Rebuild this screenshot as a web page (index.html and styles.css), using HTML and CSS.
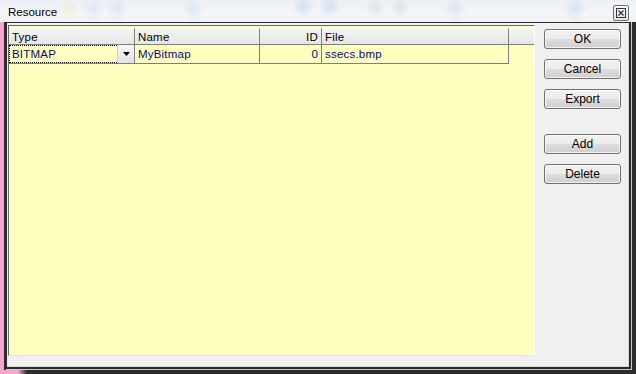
FILE: index.html
```html
<!DOCTYPE html>
<html>
<head>
<meta charset="utf-8">
<link rel="stylesheet" href="styles.css">
</head>
<body>
<div class="window">
  <div class="titlebar">
    <span class="title">Resource</span>
    <span class="close">
      <svg width="10" height="10" viewBox="0 0 10 10"><rect x="0.5" y="0.5" width="9" height="9" fill="none" stroke="#333"/><path d="M2.5 2.5L7.5 7.5M7.5 2.5L2.5 7.5" stroke="#333" stroke-width="1.3"/></svg>
    </span>
  </div>
  <div class="frame">
    <div class="ring">
      <div class="ring2">
        <div class="client">
          <div class="grid">
            <div class="row head">
              <div class="cell c-type">Type</div>
              <div class="cell c-name">Name</div>
              <div class="cell c-id num">ID</div>
              <div class="cell c-file">File</div>
              <div class="cell c-fill"></div>
            </div>
            <div class="row data">
              <div class="cell c-type combo">
                <span class="combo-text">BITMAP</span>
                <span class="drop"><svg width="7" height="4" viewBox="0 0 7 4"><path d="M0 0H7L3.5 4Z" fill="#000"/></svg></span>
              </div>
              <div class="cell c-name">MyBitmap</div>
              <div class="cell c-id num">0</div>
              <div class="cell c-file">ssecs.bmp</div>
            </div>
          </div>
          <div class="panel">
            <button class="btn">OK</button>
            <button class="btn">Cancel</button>
            <button class="btn">Export</button>
            <button class="btn gap">Add</button>
            <button class="btn">Delete</button>
          </div>
        </div>
      </div>
    </div>
  </div>
</div>
</body>
</html>
```
FILE: styles.css
```css
* { box-sizing: border-box; }
html, body { margin: 0; padding: 0; }
body {
  width: 636px;
  height: 374px;
  overflow: hidden;
  font-family: "Liberation Sans", Arial, sans-serif;
}
.window {
  width: 636px;
  height: 374px;
  display: flex;
  flex-direction: column;
  background:
    linear-gradient(to right, #f7a6d2 0, #f7a6d2 18px, #2c2c2c 27px) left bottom / 100% 4px no-repeat,
    linear-gradient(to right, #f7a6d2 0, #f7a6d2 4px, #2c2c2c 4px);
}
.titlebar {
  flex: none;
  height: 22px;
  display: flex;
  align-items: flex-start;
  justify-content: space-between;
  padding: 0 7px 0 8px;
  background:
    radial-gradient(circle at 68px 9px, rgba(225,235,140,0.3) 0, rgba(225,235,140,0) 11px),
    radial-gradient(circle at 93px 9px, rgba(185,185,240,0.25) 0, rgba(185,185,240,0) 12px),
    radial-gradient(circle at 117px 9px, rgba(185,175,235,0.25) 0, rgba(185,175,235,0) 12px),
    radial-gradient(circle at 193px 9px, rgba(140,185,235,0.22) 0, rgba(140,185,235,0) 11px),
    radial-gradient(circle at 303px 7px, rgba(110,170,235,0.25) 0, rgba(110,170,235,0) 11px),
    radial-gradient(circle at 330px 7px, rgba(110,160,230,0.22) 0, rgba(110,160,230,0) 11px),
    radial-gradient(circle at 375px 8px, rgba(160,160,180,0.2) 0, rgba(160,160,180,0) 10px),
    radial-gradient(circle at 400px 8px, rgba(160,160,180,0.2) 0, rgba(160,160,180,0) 10px),
    radial-gradient(circle at 455px 9px, rgba(140,155,225,0.2) 0, rgba(140,155,225,0) 11px),
    radial-gradient(circle at 575px 9px, rgba(120,175,235,0.22) 0, rgba(120,175,235,0) 12px),
    linear-gradient(to bottom, #eceff4 0, #f5f6f9 60%, #eff1f4 100%);
}
.title {
  font-size: 11.5px;
  color: #000;
  padding-top: 6px;
  line-height: 13px;
}
.close {
  margin-top: 5px;
  width: 16px;
  height: 16px;
  border: 1px solid #6f6f6f;
  border-radius: 2px;
  background: linear-gradient(#fbfbfb, #e4e4e4);
  display: flex;
  align-items: center;
  justify-content: center;
}
.frame {
  flex: 1;
  display: flex;
  padding: 0 4px 4px 6px;
}
.ring {
  flex: 1;
  display: flex;
  border-style: solid;
  border-color: #c9c9c9;
  border-width: 0 1px 1px 0;
}
.ring2 {
  flex: 1;
  display: flex;
  border-style: solid;
  border-color: #2c2c2c;
  border-width: 1px 2px 2px 1px;
}
.client {
  flex: 1;
  display: flex;
  align-items: flex-start;
  background: #f0f0f0;
  border-right: 1px solid #d9d9d9;
  border-bottom: 1px solid #d9d9d9;
}
.grid {
  width: 527px;
  height: 331px;
  margin: 2px 0 0 1px;
  padding-top: 2px;
  border-left: 1px solid #6a6a6a;
  border-top: 1px solid #6a6a6a;
  border-right: 1px solid #ffffff;
  border-bottom: 1px solid #e4e4e4;
  background: #ffffc0;
  font-size: 11.5px;
  letter-spacing: 0.2px;
}
.row {
  display: flex;
}
.cell {
  flex: none;
  border-right: 1px solid #7f7f7f;
  border-bottom: 1px solid #7f7f7f;
  padding: 0 3px;
  white-space: nowrap;
  overflow: hidden;
}
.head .cell {
  height: 17px;
  line-height: 16px;
  color: #000;
  background: linear-gradient(#f4f4f4, #e6e6e6);
  border-top: 1px solid #ffffff;
}
.head {
  background: #ffffc0;
}
.data .cell {
  height: 19px;
  line-height: 18px;
  color: #0a0a78;
}
.c-type { width: 126px; }
.c-name { width: 125px; }
.c-id { width: 62px; }
.c-file { width: 187px; }
.c-fill { width: 25px; border-right: none; }
.num { text-align: right; }
.combo {
  display: flex;
  padding: 0;
}
.combo-text {
  flex: 1;
  border: 1px dotted #000;
  padding: 0 2px;
  line-height: 16px;
  height: 18px;
  border-right: none;
}
.drop {
  width: 17px;
  height: 18px;
  background: linear-gradient(#f6f6f6, #e2e2e2);
  border-left: 1px solid #d0d0d0;
  display: flex;
  align-items: center;
  justify-content: center;
}
.panel {
  display: flex;
  flex-direction: column;
  gap: 10px;
  padding: 6px 0 0 9px;
}
.btn {
  width: 77px;
  height: 20px;
  padding: 0;
  border: 1px solid #707070;
  border-radius: 3px;
  background: linear-gradient(#f2f2f2 0, #ebebeb 50%, #dddddd 50%, #cfcfcf 100%);
  font-family: "Liberation Sans", Arial, sans-serif;
  font-size: 12px;
  color: #000;
  line-height: 18px;
  box-shadow: inset 0 0 0 1px rgba(255,255,255,0.7);
}
.btn.gap { margin-top: 15px; }
```
